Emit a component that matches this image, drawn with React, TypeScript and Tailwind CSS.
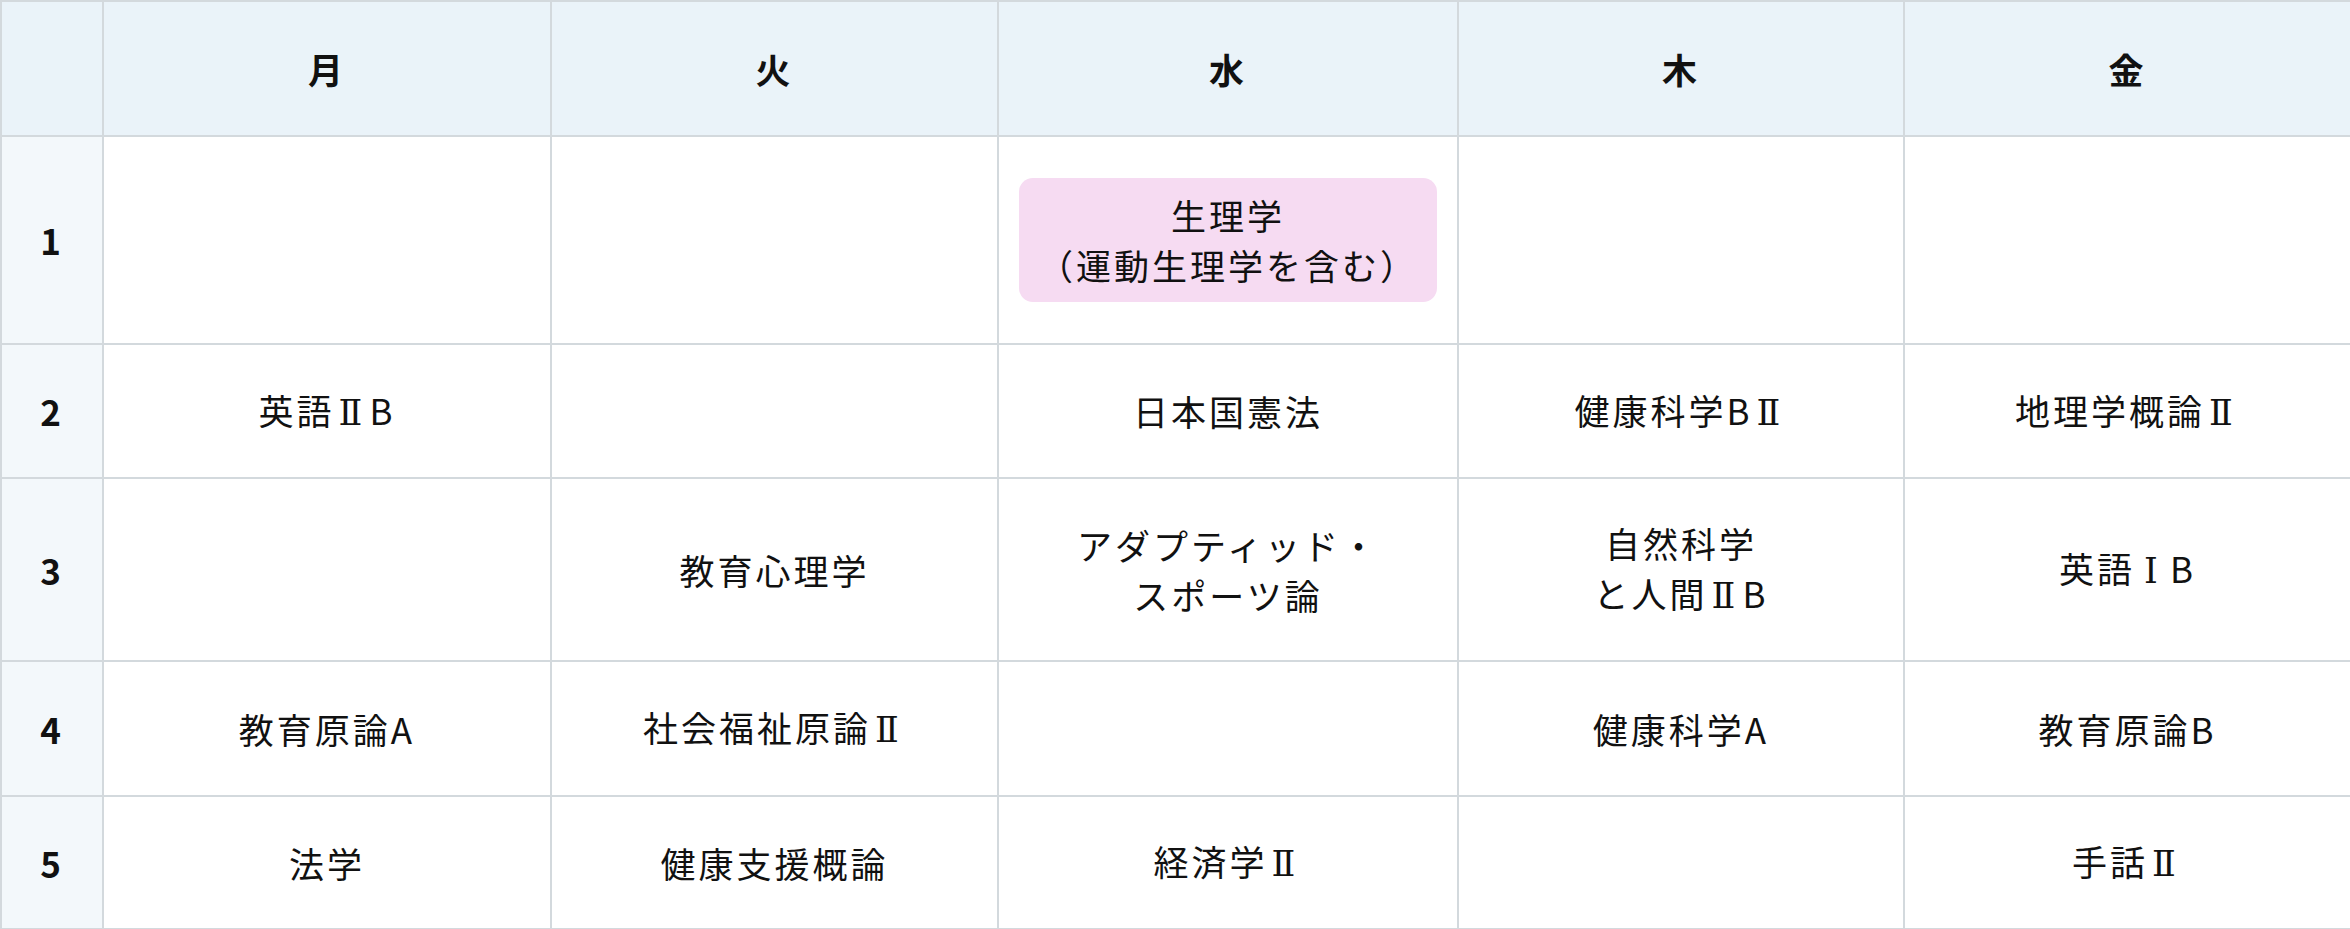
import React from 'react';

type Cell = { text?: string[]; badge?: boolean };

const days = ['月', '火', '水', '木', '金'];

const rows: { period: string; height: string; cells: Cell[] }[] = [
  {
    period: '1',
    height: 'h-[208px]',
    cells: [{}, {}, { text: ['生理学', '（運動生理学を含む）'], badge: true }, {}, {}],
  },
  {
    period: '2',
    height: 'h-[134px]',
    cells: [{ text: ['英語ⅡB'] }, {}, { text: ['日本国憲法'] }, { text: ['健康科学BⅡ'] }, { text: ['地理学概論Ⅱ'] }],
  },
  {
    period: '3',
    height: 'h-[183px]',
    cells: [
      {},
      { text: ['教育心理学'] },
      { text: ['アダプティッド・', 'スポーツ論'] },
      { text: ['自然科学', 'と人間ⅡB'] },
      { text: ['英語ⅠB'] },
    ],
  },
  {
    period: '4',
    height: 'h-[135px]',
    cells: [{ text: ['教育原論A'] }, { text: ['社会福祉原論Ⅱ'] }, {}, { text: ['健康科学A'] }, { text: ['教育原論B'] }],
  },
  {
    period: '5',
    height: 'h-[133px]',
    cells: [{ text: ['法学'] }, { text: ['健康支援概論'] }, { text: ['経済学Ⅱ'] }, {}, { text: ['手話Ⅱ'] }],
  },
];

// roman numerals get the barred glyph, centred in a full-width slot
const Line: React.FC<{ text: string }> = ({ text }) => (
  <div>
    {text.split(/([ⅠⅡ])/).map((part, i) =>
      part === 'Ⅰ' || part === 'Ⅱ' ? (
        <span key={i} className="inline-block w-[1em] text-center font-['DejaVu_Serif',serif]">
          {part}
        </span>
      ) : (
        <React.Fragment key={i}>{part}</React.Fragment>
      )
    )}
  </div>
);

export default function App() {
  return (
    <div lang="ja" className="w-[2350px] bg-white text-[#111] font-['Noto_Sans_CJK_JP',sans-serif]">
      <table className="w-full table-fixed border-collapse border-2 border-[#d3d9dd] text-[35px] leading-[50px] tracking-[3px]">
        <colgroup>
          <col className="w-[102px]" />
          <col className="w-[448px]" />
          <col className="w-[447px]" />
          <col className="w-[460px]" />
          <col className="w-[446px]" />
          <col className="w-[447px]" />
        </colgroup>
        <thead>
          <tr className="h-[135px] bg-[#eaf3f9]">
            <th className="border-2 border-[#d3d9dd]" />
            {days.map((d) => (
              <th key={d} className="border-2 border-[#d3d9dd] text-center align-middle font-bold">
                {d}
              </th>
            ))}
          </tr>
        </thead>
        <tbody>
          {rows.map((r) => (
            <tr key={r.period} className={r.height}>
              <td className="border-2 border-[#d3d9dd] bg-[#f3f8fb] text-center align-middle font-bold">
                {r.period}
              </td>
              {r.cells.map((c, i) => (
                <td key={i} className="border-2 border-[#d3d9dd] px-5 text-center align-middle">
                  {c.badge && c.text ? (
                    <div className="rounded-[14px] bg-[#f6dbf2] py-3">
                      {c.text.map((t) => (
                        <Line key={t} text={t} />
                      ))}
                    </div>
                  ) : c.text ? (
                    c.text.map((t) => <Line key={t} text={t} />)
                  ) : null}
                </td>
              ))}
            </tr>
          ))}
        </tbody>
      </table>
    </div>
  );
}
